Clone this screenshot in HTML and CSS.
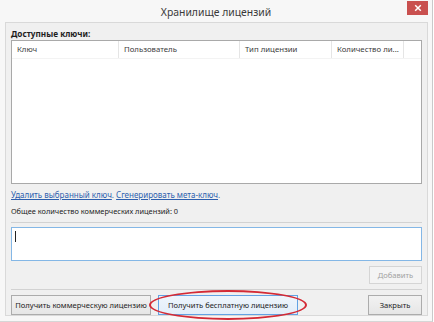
FILE: index.html
```html
<!DOCTYPE html>
<html lang="ru">
<head>
<meta charset="utf-8">
<title>Хранилище лицензий</title>
<link rel="stylesheet" href="styles.css">
</head>
<body>
<div class="window">
  <div class="titlebar">
    <span class="spacer"></span>
    <span class="title">Хранилище лицензий</span>
    <span class="close-wrap"><span class="close"><svg width="8" height="8" viewBox="0 0 8 8"><path d="M1.2 1.2L6.8 6.8M6.8 1.2L1.2 6.8" stroke="#fff" stroke-width="1.5"/></svg></span></span>
  </div>
  <div class="panel">
    <div class="label-bold">Доступные ключи:</div>
    <div class="list">
      <div class="list-head">
        <div class="col c1">Ключ</div>
        <div class="col c2">Пользователь</div>
        <div class="col c3">Тип лицензии</div>
        <div class="col c4">Количество ли...</div>
        <div class="col c5"></div>
      </div>
    </div>
    <div class="links"><a class="link">Удалить выбранный ключ</a>. <a class="link">Сгенерировать мета-ключ</a>.</div>
    <div class="count">Общее количество коммерческих лицензий: 0</div>
    <div class="sep"></div>
    <div class="input"><span class="caret"></span></div>
    <div class="add-row"><span class="btn disabled">Добавить</span></div>
    <div class="sep sep2"></div>
    <div class="buttons">
      <span class="btn wide">Получить коммерческую лицензию</span>
      <span class="highlight-wrap"><span class="btn wide focused">Получить бесплатную лицензию</span><span class="ring"></span></span>
      <span class="grow"></span>
      <span class="btn close-btn">Закрыть</span>
    </div>
  </div>
</div>
</body>
</html>
```
FILE: styles.css
```css
html, body {
  margin: 0;
  padding: 0;
  background: #ffffff;
}
body {
  font-family: "Noto Sans", "Open Sans", sans-serif;
  font-size: 8px;
  color: #1e1e1e;
}
.window {
  width: 432px;
  height: 321px;
  background: #f7f7f7;
  border-right: 1px solid #c9c9c9;
  border-bottom: 1px solid #d6d6d6;
  display: flex;
  flex-direction: column;
}
.titlebar {
  height: 22px;
  display: grid;
  grid-template-columns: 1fr auto 1fr;
  align-items: start;
}
.title {
  font-size: 10.4px;
  color: #3a3a3a;
  line-height: 22px;
  padding-top: 1px;
}
.close-wrap {
  display: flex;
  justify-content: flex-end;
  padding-right: 4px;
  padding-top: 1px;
}
.close {
  width: 21px;
  height: 14px;
  background: #c9504f;
  display: flex;
  align-items: center;
  justify-content: center;
}
.panel {
  margin: 0 4px 0 5px;
  height: 294px;
  background: #f0f0f0;
  border: 1px solid #d9d9d9;
  box-sizing: border-box;
  padding: 5px 5px 0 5px;
  display: flex;
  flex-direction: column;
}
.label-bold {
  font-weight: bold;
  font-size: 8.2px;
  line-height: 12px;
  height: 12px;
}
.list {
  height: 146px;
  background: #fff;
  border: 1px solid #a9a9a9;
  box-sizing: border-box;
}
.list-head {
  display: flex;
  height: 17px;
  border-bottom: 1px solid #f3f3f3;
}
.col {
  box-sizing: border-box;
  border-right: 1px solid #e5e5e5;
  padding-left: 5px;
  font-size: 7.8px;
  line-height: 16px;
  color: #3c3c3c;
  white-space: nowrap;
}
.c1 { width: 107px; }
.c2 { width: 121px; }
.c3 { width: 92px; }
.c4 { width: 72px; }
.c5 { width: 0; border-right: none; }
.links {
  margin-top: 4px;
  line-height: 13px;
  color: #2d5fae;
}
.link {
  color: #2d5fae;
  text-decoration: underline;
}
.count {
  margin-top: 4px;
  font-size: 7.4px;
  line-height: 13px;
  color: #1e1e1e;
}
.sep {
  margin-top: 4px;
  height: 1px;
  background: #d2d2d2;
}
.input {
  margin-top: 4px;
  height: 34px;
  background: #fff;
  border: 1px solid #84b7e6;
  box-sizing: border-box;
  padding: 3px 3px;
}
.caret {
  display: block;
  width: 1px;
  height: 11px;
  background: #222;
}
.add-row {
  margin-top: 5px;
  display: flex;
  justify-content: flex-end;
}
.btn {
  box-sizing: border-box;
  height: 18px;
  border: 1px solid #acacac;
  background: linear-gradient(#f2f2f2, #e6e6e6);
  display: inline-flex;
  align-items: center;
  justify-content: center;
  font-size: 7.6px;
  color: #1e1e1e;
  white-space: nowrap;
}
.btn.disabled {
  width: 53px;
  border-color: #d5d5d5;
  background: #f4f4f4;
  color: #a2a2a2;
}
.sep2 {
  margin-top: 5px;
}
.buttons {
  margin-top: 5px;
  display: flex;
  align-items: center;
}
.buttons .btn {
  height: 20px;
}
.wide {
  width: 140px;
}
.highlight-wrap {
  position: relative;
  margin-left: 7px;
  display: inline-flex;
}
.btn.focused {
  border-color: #62a2e4;
  background: linear-gradient(#eef5fc, #e3eef9);
}
.ring {
  position: absolute;
  left: -9px;
  top: -5px;
  width: 158px;
  height: 30px;
  box-sizing: border-box;
  border: 2px solid #d42a35;
  border-radius: 50%;
}
.grow {
  flex: 1;
}
.close-btn {
  width: 54px;
}
```
